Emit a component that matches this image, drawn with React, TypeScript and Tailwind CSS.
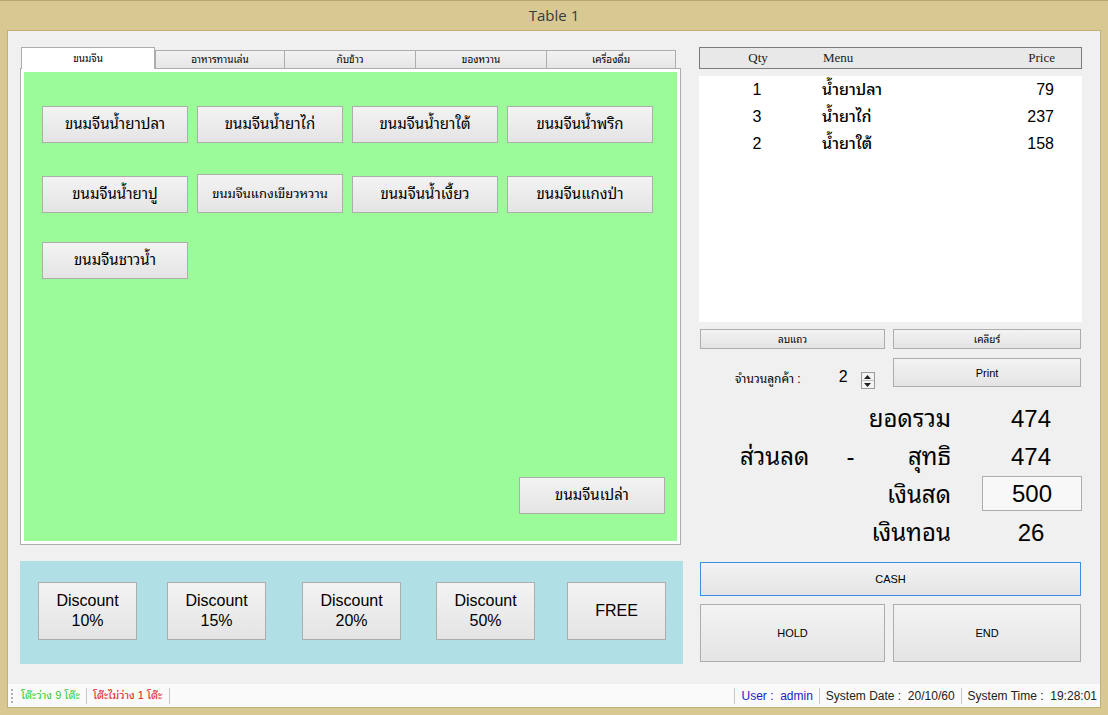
import React from "react";

// Ventana POS "Table 1": menú de ขนมจีน a la izquierda, cuenta a la derecha.
const winBtn =
  "border border-[#adadad] bg-linear-to-b from-[#f3f3f3] to-[#e4e4e4] text-black flex items-center justify-center";

const tabs = ["ขนมจีน", "อาหารทานเล่น", "กับข้าว", "ของหวาน", "เครื่องดื่ม"];
const tabWidths = ["w-[134px]", "w-[129px]", "w-[131px]", "w-[131px]", "w-[130px]"];

const row1 = ["ขนมจีนน้ำยาปลา", "ขนมจีนน้ำยาไก่", "ขนมจีนน้ำยาใต้", "ขนมจีนน้ำพริก"];
const row2 = ["ขนมจีนน้ำยาปู", "ขนมจีนแกงเขียวหวาน", "ขนมจีนน้ำเงี้ยว", "ขนมจีนแกงป่า"];

const orders = [
  { qty: 1, menu: "น้ำยาปลา", price: 79 },
  { qty: 3, menu: "น้ำยาไก่", price: 237 },
  { qty: 2, menu: "น้ำยาใต้", price: 158 },
];

const discounts = [
  { label: ["Discount", "10%"], ml: "ml-[18px]" },
  { label: ["Discount", "15%"], ml: "ml-[30px]" },
  { label: ["Discount", "20%"], ml: "ml-[36px]" },
  { label: ["Discount", "50%"], ml: "ml-[35px]" },
  { label: ["FREE"], ml: "ml-[32px]" },
];

const thai =
  "font-['Liberation_Sans','Noto_Sans_Thai_Looped','Noto_Sans_Thai','Noto_Sans',sans-serif]";

const MenuButton: React.FC<{ text: string; tall?: boolean; small?: boolean }> = ({
  text,
  tall,
  small,
}) => (
  <button
    className={`${winBtn} w-[146px] ${tall ? "h-[39px]" : "h-[37px]"} ${
      small ? "text-[13px]" : "text-[15px]"
    }`}
  >
    {text}
  </button>
);

const Sep = () => <span className="w-px h-[16px] bg-[#c8c8c8] mx-[6px]" />;

export default function App() {
  return (
    <div className={`w-[1108px] h-[715px] bg-[#d8c992] flex flex-col ${thai}`}>
      {/* Title bar */}
      <div className="h-[30px] flex items-center justify-center text-[15px] text-[#3a3a3a] font-['Open_Sans',sans-serif] border-t border-[#b8a870]">
        Table 1
      </div>

      <div className="flex-1 mx-[7px] mb-[7px] border border-[#c2b173] bg-[#f0f0f0] flex flex-col">
        <div className="h-[653px] flex pl-[12px] pt-[16px]">
          {/* Left column */}
          <div className="w-[663px] flex flex-col">
            <div className="h-[21px] flex items-end pl-[1px]">
              {tabs.map((t, i) => (
                <div
                  key={t}
                  className={`${tabWidths[i]} flex items-center justify-center text-[10px] border-t border-l border-[#adadad] ${
                    i === tabs.length - 1 ? "border-r" : ""
                  } ${
                    i === 0
                      ? "h-[22px] bg-white relative z-10 -mb-px border-r"
                      : "h-[18px] bg-linear-to-b from-[#f2f2f2] to-[#e6e6e6]"
                  }`}
                >
                  {t}
                </div>
              ))}
            </div>
            <div className="w-[661px] h-[477px] border border-[#adadad] bg-white p-[3px]">
              <div className="w-full h-full bg-[#9afb98] flex flex-col pl-[18px] pt-[34px]">
                <div className="flex gap-[9px]">
                  {row1.map((t) => (
                    <MenuButton key={t} text={t} />
                  ))}
                </div>
                <div className="flex gap-[9px] items-end mt-[31px]">
                  {row2.map((t, i) => (
                    <MenuButton key={t} text={t} tall={i === 1} small={i === 1} />
                  ))}
                </div>
                <div className="flex mt-[29px]">
                  <MenuButton text="ขนมจีนชาวน้ำ" />
                </div>
                <div className="mt-auto self-end mr-[12px] mb-[27px]">
                  <MenuButton text="ขนมจีนเปล่า" />
                </div>
              </div>
            </div>

            <div className="mt-[16px] h-[103px] bg-[#b0e0e6] flex items-start pt-[21px]">
              {discounts.map((d) => (
                <button
                  key={d.label.join()}
                  className={`${winBtn} ${d.ml} w-[99px] h-[58px] flex-col text-[16px] leading-[20px] font-['Liberation_Sans',sans-serif]`}
                >
                  {d.label.map((l) => (
                    <span key={l}>{l}</span>
                  ))}
                </button>
              ))}
            </div>
          </div>

          {/* Right column */}
          <div className="w-[383px] ml-[16px] flex flex-col">
            <div className="h-[22px] border border-[#7a7a7a] bg-[#e8e8e8] relative flex items-center text-[13px] font-['Liberation_Serif',serif] text-[#222]">
              <span className="w-[116px] text-center">Qty</span>
              <span className="ml-[7px]">Menu</span>
              <span className="ml-auto mr-[26px]">Price</span>
            </div>
            <div className="mt-[7px] h-[246px] bg-white">
              {orders.map((o) => (
                <div key={o.menu} className="h-[27px] flex items-center text-[16px] text-black">
                  <span className="w-[116px] text-center">{o.qty}</span>
                  <span className="ml-[7px] font-medium">{o.menu}</span>
                  <span className="ml-auto mr-[28px]">{o.price}</span>
                </div>
              ))}
            </div>

            <div className="mt-[7px] flex pl-[1px]">
              <button className={`${winBtn} w-[185px] h-[20px] text-[10px]`}>ลบแถว</button>
              <button className={`${winBtn} ml-[8px] w-[188px] h-[20px] text-[10px]`}>เคลียร์</button>
            </div>

            <div className="mt-[9px] flex items-start">
              <div className="w-[194px] h-[29px] flex items-end">
                <span className="ml-[36px] text-[12px] mb-[-1px]">จำนวนลูกค้า :</span>
                <span className="ml-[38px] text-[16px] leading-[20px]">2</span>
                <div className="ml-[13px] w-[14px] h-[17px] border border-[#9a9a9a] bg-[#f4f4f4] flex flex-col mb-[-2px]">
                  <div className="flex-1 flex items-center justify-center border-b border-[#c0c0c0]">
                    <svg width="7" height="4" viewBox="0 0 7 4">
                      <path d="M0 4 L3.5 0 L7 4 Z" fill="#222" />
                    </svg>
                  </div>
                  <div className="flex-1 flex items-center justify-center">
                    <svg width="7" height="4" viewBox="0 0 7 4">
                      <path d="M0 0 L3.5 4 L7 0 Z" fill="#222" />
                    </svg>
                  </div>
                </div>
              </div>
              <button className={`${winBtn} w-[188px] h-[29px] text-[11px] font-['Liberation_Sans',sans-serif] items-start pt-[6px]`}>
                Print
              </button>
            </div>

            <div className="mt-[13px] flex flex-col text-[24px] text-black">
              <div className="h-[38px] flex items-center">
                <span className="w-[252px] text-right">ยอดรวม</span>
                <span className="ml-[30px] w-[100px] text-center">474</span>
              </div>
              <div className="h-[38px] flex items-center">
                <div className="w-[252px] flex items-center">
                  <span className="ml-[41px]">ส่วนลด</span>
                  <span className="ml-[37px]">-</span>
                  <span className="ml-auto">สุทธิ</span>
                </div>
                <span className="ml-[30px] w-[100px] text-center">474</span>
              </div>
              <div className="h-[38px] flex items-center">
                <span className="w-[252px] text-right">เงินสด</span>
                <div className="ml-[31px] w-[100px] h-[35px] border border-[#adadad] bg-[#f8f8f8] flex items-center justify-center -mt-[3px]">
                  500
                </div>
              </div>
              <div className="h-[38px] flex items-center">
                <span className="w-[252px] text-right">เงินทอน</span>
                <span className="ml-[30px] w-[100px] text-center">26</span>
              </div>
            </div>

            <button
              className="mt-[10px] ml-[1px] w-[381px] h-[34px] border border-[#3d8ee0] bg-linear-to-b from-[#f3f3f3] to-[#e4e4e4] flex items-center justify-center text-[11px] font-['Liberation_Sans',sans-serif]"
            >
              CASH
            </button>
            <div className="mt-[8px] flex pl-[1px]">
              <button className={`${winBtn} w-[185px] h-[58px] text-[11px] font-['Liberation_Sans',sans-serif]`}>
                HOLD
              </button>
              <button className={`${winBtn} ml-[8px] w-[188px] h-[58px] text-[11px] font-['Liberation_Sans',sans-serif]`}>
                END
              </button>
            </div>
          </div>
        </div>

        {/* Status bar */}
        <div className="flex-1 bg-[#fafafa] flex items-center text-[12px] pl-[2px] pr-[3px]">
          <div className="flex flex-col gap-[2px] ml-[1px] mr-[8px]">
            <span className="w-[2px] h-[2px] bg-[#b0b0b0]" />
            <span className="w-[2px] h-[2px] bg-[#b0b0b0]" />
            <span className="w-[2px] h-[2px] bg-[#b0b0b0]" />
            <span className="w-[2px] h-[2px] bg-[#b0b0b0]" />
          </div>
          <span className="text-[#33cc33] text-[11px]">โต๊ะว่าง 9 โต๊ะ</span>
          <Sep />
          <span className="text-[#e02020] text-[11px]">โต๊ะไม่ว่าง 1 โต๊ะ</span>
          <Sep />
          <span className="ml-auto" />
          <Sep />
          <span className="text-[#1a1acc]">User :&nbsp; admin</span>
          <Sep />
          <span className="text-[#222]">System Date :&nbsp; 20/10/60</span>
          <Sep />
          <span className="text-[#222]">System Time :&nbsp; 19:28:01</span>
        </div>
      </div>
    </div>
  );
}
